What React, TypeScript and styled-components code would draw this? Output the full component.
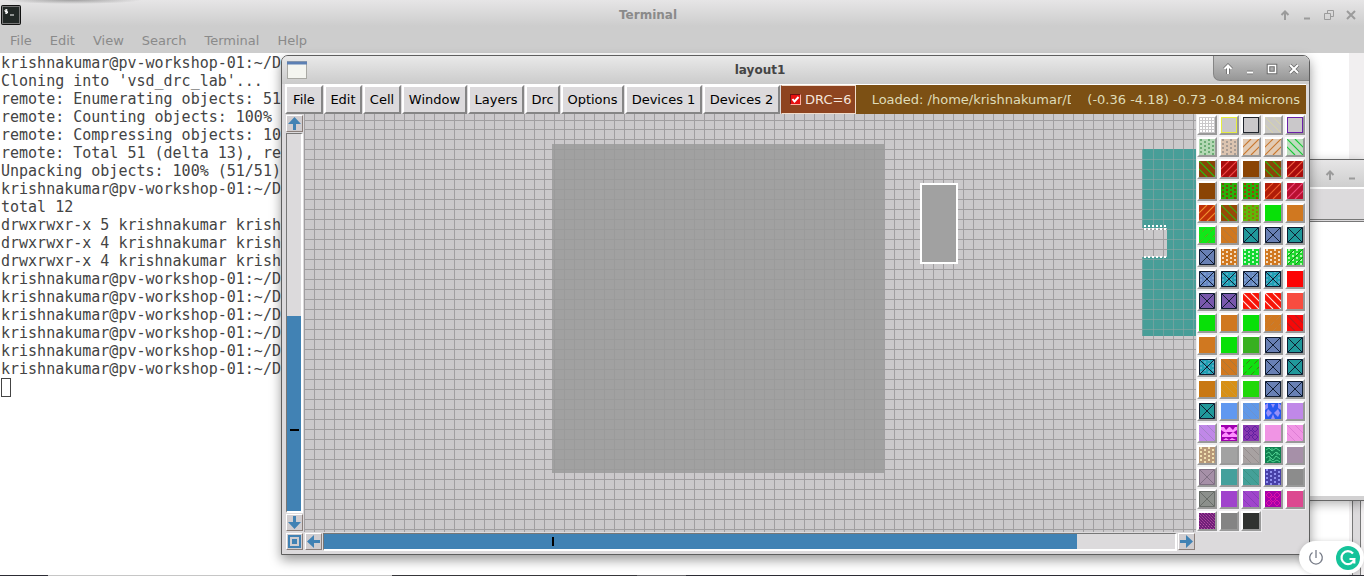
import React from 'react';
import styled, { createGlobalStyle, css } from 'styled-components';

const GlobalStyle = createGlobalStyle`
  * { box-sizing: border-box; }
  body { margin: 0; background: #fff; font-family: "DejaVu Sans", sans-serif; font-size: 13px; }
  button { font: inherit; color: inherit; border: 0; margin: 0; padding: 0; background: none; }
`;

const Desktop = styled.div`
  position: relative;
  display: flex;
  flex-direction: column;
  height: 100vh;
  min-height: 480px;
  margin-right: 2px;
  overflow: hidden;
`;

const Terminal = styled.section`
  flex: 1;
  min-height: 0;
  display: flex;
  flex-direction: column;
`;

const TerminalHead = styled.header`
  height: 53px;
  flex: none;
  color: #8a8a8a;
  background:
    radial-gradient(ellipse 70px 4px at 72px 0, rgba(90, 90, 90, 0.5), rgba(90, 90, 90, 0)),
    linear-gradient(#e6e5e6, #cdcdcd 26px);
`;

const TitleBar = styled.div<{ $height: number }>`
  display: flex;
  align-items: center;
  height: ${(p) => p.$height}px;
  font-size: 12px;
  font-weight: bold;
`;

const Title = styled.span`
  flex: 1;
  text-align: center;
`;

const TerminalTitle = styled(TitleBar)`
  padding: 1px 3px 0 1px;
`;

const Controls = styled.div<{ $active?: boolean }>`
  display: flex;
  gap: 2px;
  ${(p) =>
    p.$active &&
    css`
      align-self: start;
      height: 25px;
      padding: 3px 5px 0 4px;
      border: 1px solid #858585;
      border-width: 0 0 1px 1px;
      border-radius: 0 6px 0 7px;
      background: linear-gradient(#c4c4c4, #979797);
    `}
`;

const ControlButton = styled.button`
  display: grid;
  place-items: center;
  width: 20px;
  height: 20px;
`;

const TermMenu = styled.nav`
  display: flex;
  gap: 18px;
  padding: 5px 10px 0;
  line-height: 16px;
`;

const TermBody = styled.div`
  display: flex;
  flex: 1;
  min-height: 0;
  background: #fff;
`;

const Output = styled.pre`
  flex: 1;
  margin: 0;
  padding: 1px;
  font: 15px/18px "DejaVu Sans Mono", monospace;
  color: #444;
`;

const Caret = styled.span`
  display: block;
  width: 10px;
  height: 19px;
  border: 1px solid #444;
`;

const TermScroll = styled.div`
  width: 15px;
  background: #f1eff0;
`;

const Taskbar = styled.footer`
  display: flex;
  flex: none;
  height: 1px;
`;

const Task = styled.span<{ $grow: number; $color: string }>`
  flex: ${(p) => p.$grow} 0 0;
  background: ${(p) => p.$color};
`;

const SideWindow = styled.section`
  position: absolute;
  right: 0;
  top: 159px;
  bottom: 75px;
  width: 110px;
  display: flex;
  flex-direction: column;
  background: #fff;
  border-top: 1px solid #666;
  border-bottom: 1px solid #666;
  box-shadow: 0 3px 10px rgba(0, 0, 0, 0.3);
`;

const SideTitle = styled.div`
  display: flex;
  flex: none;
  justify-content: flex-end;
  align-items: center;
  gap: 2px;
  height: 29px;
  padding: 2px 2px 0;
  background: linear-gradient(#e6e5e6, #cfcfcf);
  border-bottom: 2px solid #fff;
`;

const SideMenu = styled.div`
  height: 33px;
  background: #dcdadc;
  border-bottom: 3px double #777;
`;

const SideFoot = styled.div`
  height: 4px;
  margin-top: auto;
  background: #d2d1d2;
`;

const LowerFrame = styled.div`
  position: absolute;
  right: 3px;
  bottom: 1px;
  width: 9px;
  height: 74px;
  background: #dcdadc;
  border: 1px solid #777;
  border-width: 0 1px;
`;

const LayoutWindow = styled.section`
  position: absolute;
  left: 281px;
  right: 54px;
  top: 55px;
  bottom: 21px;
  display: flex;
  flex-direction: column;
  border: 1px solid #5e5e5e;
  border-radius: 7px 7px 0 0;
  background: #dcdadc;
  box-shadow: 0 5px 12px rgba(0, 0, 0, 0.4);
`;

const LayoutTitle = styled(TitleBar)`
  flex: none;
  padding-left: 5px;
  color: #444;
  border-radius: 6px 6px 0 0;
  background: linear-gradient(#e9e9e9, #cbcbcb);
`;

const Frame = styled.div`
  flex: 1;
  min-height: 0;
  display: flex;
  flex-direction: column;
  margin: 0 3px 2px;
  border-top: 1px solid #fff;
`;

const Toolbar = styled.div`
  display: flex;
  flex: none;
  height: 29px;
  color: #000;
`;

const ToolButton = styled.button<{ $width: number }>`
  flex: none;
  width: ${(p) => p.$width}px;
  margin-right: 1px;
  border: 2px solid;
  border-color: #fff #858585 #858585 #fff;
  background: #dcdadc;
  line-height: 24px;
  text-align: center;
  white-space: nowrap;
`;

const DrcToggle = styled.label`
  display: flex;
  flex: none;
  align-items: center;
  gap: 4px;
  padding: 0 3px 0 8px;
  color: #f5e6dc;
  background: #8e4420;
  border: 1px solid #f0dccb;
  border-left-color: #8e4420;
`;

const DrcBox = styled.input`
  appearance: none;
  width: 11px;
  height: 11px;
  margin: 0;
  border: 1px solid;
  border-color: #701010 #ffb0a0 #ffb0a0 #701010;
  background: #e81010 url("data:image/svg+xml,%3Csvg xmlns='http://www.w3.org/2000/svg' viewBox='0 0 9 9'%3E%3Cpath d='M1.5 4l2 2.5 4-4.500' fill='none' stroke='white' stroke-width='2'/%3E%3C/svg%3E");
`;

const Status = styled.div`
  flex: 1;
  min-width: 0;
  display: flex;
  align-items: center;
  gap: 16px;
  padding: 0 6px 0 16px;
  white-space: nowrap;
  color: #dfdcb8;
  background: #7c5014;
`;

const Loaded = styled.span`
  flex: 1;
  min-width: 0;
  overflow: hidden;
`;

const Work = styled.div`
  flex: 1;
  min-height: 0;
  display: grid;
  grid-template-columns: 19px minmax(0, 1fr) auto;
  grid-template-rows: minmax(0, 1fr) 20px;
`;

const Scroll = styled.div<{ $vertical?: boolean }>`
  display: flex;
  flex-direction: ${(p) => (p.$vertical ? 'column' : 'row')};
  gap: 1px;
  padding: 1px;
`;

const ArrowButton = styled.button`
  display: grid;
  place-items: center;
  flex: none;
  width: 17px;
  height: 17px;
  border: 1px solid;
  border-color: #fff #8b7f7a #8b7f7a #fff;
  background: #d0cdd0;
`;

const Trough = styled.div<{ $vertical?: boolean }>`
  flex: 1;
  display: flex;
  flex-direction: ${(p) => (p.$vertical ? 'column' : 'row')};
  border: 1px solid;
  border-width: 1px 2px 2px 1px;
  border-color: #777 #fff #fff #777;
  background: #dcdadc;
`;

const Space = styled.div<{ $grow: number }>`
  flex: ${(p) => p.$grow} 0 0;
`;

const Thumb = styled.div<{ $grow: number; $vertical?: boolean }>`
  flex: ${(p) => p.$grow} 0 0;
  display: flex;
  flex-direction: ${(p) => (p.$vertical ? 'column' : 'row')};
  align-items: center;
  background: #4182b4;
`;

const Mark = styled.div<{ $vertical?: boolean }>`
  width: ${(p) => (p.$vertical ? 9 : 2)}px;
  height: ${(p) => (p.$vertical ? 2 : 9)}px;
  background: #000;
`;

const CanvasBox = styled.div`
  overflow: hidden;
  background: #cbc9cb;
`;

const Palette = styled.div`
  grid-row: span 2;
  display: grid;
  grid-template-columns: repeat(5, 20px);
  grid-auto-rows: 20px;
  gap: 2px;
  padding: 1px;
  align-content: start;
`;

const SwatchButton = styled.button`
  border: 2px solid;
  border-color: #fff #999 #999 #fff;
  outline: 1px solid #efeef0;
  background: #fff;
  line-height: 0;
`;

const Pill = styled.div`
  position: absolute;
  right: 0;
  bottom: 2px;
  display: flex;
  align-items: center;
  justify-content: space-between;
  width: 65px;
  height: 33px;
  padding: 0 4px 0 9px;
  border-radius: 17px;
  background: #fff;
  box-shadow: 0 0 5px rgba(0, 0, 0, 0.15);
`;

type Kind = 'pin' | 'min' | 'max' | 'restore' | 'close';
const shapes: Record<Kind, React.ReactNode> = {
  pin: <path d="M6 11V3M2.500 6L6 2.500 9.500 6" />,
  min: <path d="M3 9.500h6" />,
  max: <path d="M2.500 2.500h7v7h-7z" />,
  restore: <path d="M1.500 4.500h6v6h-6zM4.500 4V1.500h6v6H8" />,
  close: <path d="M2 2l8 8M10 2l-8 8" />,
};

const Control = ({ kind, active }: { kind: Kind; active?: boolean }) => (
  <ControlButton aria-label={kind}>
    <svg width="12" height="12" viewBox="0 0 12 12" fill="none" overflow="visible">
      {active && <g stroke="#6c6c6c" strokeWidth="3.6">{shapes[kind]}</g>}
      <g stroke={active ? '#fff' : '#9b9b9b'} strokeWidth={kind === 'restore' ? 1 : kind === 'max' ? 1.5 : 2}>{shapes[kind]}</g>
    </svg>
  </ControlButton>
);

const Arrow = ({ turn, name }: { turn: number; name: string }) => (
  <ArrowButton aria-label={name}>
    <svg width="15" height="15" viewBox="0 0 15 15">
      <path transform={`rotate(${turn} 7.5 7.5)`} d="M7.500 1L14 8H9v6H6V8H1z" fill="#4182b4" />
    </svg>
  </ArrowButton>
);

type Fill = 'solid' | 'box' | 'squares' | 'dots' | 'up' | 'down' | 'x' | 'xdots' | 'upFaint' | 'downFaint' | 'dotsUp' | 'tri' | 'blobs' | 'rings' | 'maze' | 'hatch';
type Sw = [string, Fill?, string?];

const N = '#101c30';
const G = '#08e008';
const O = '#d07820';
const T: Sw = ['#20989a', 'x', N];
const B: Sw = ['#6880b4', 'x', N];

const layers: Sw[] = [
  ['#cac8ca', 'squares', '#fff'], ['#cac8ca', 'box', '#e6ee40'], ['#cac8ca', 'box', '#20242c'], ['#cac8c4', 'downFaint', '#dcd8a0'], ['#cac8ca', 'box', '#6a20a8'],
  ['#b4d8b4', 'dots', '#6cac74'], ['#dcc4b0', 'dots', '#a89c94'], ['#e2cbb4', 'up', '#c87830'], ['#e2cbb4', 'up', '#c87830'], ['#c0dcc0', 'down', '#18c838'],
  ['#8a4408', 'down', '#28c010'], ['#a80c0c', 'up', '#f04848'], ['#8a4404'], ['#8a4408', 'down', '#28c010'], ['#a80c0c', 'up', '#f06040'],
  ['#8a4404'], ['#28b008', 'dots', '#784c08'], ['#28b008', 'dots', '#a03c08'], ['#b01c08', 'up', '#f06030'], ['#b81030', 'up', '#f04878'],
  ['#c03008', 'up', '#f09030'], ['#984808', 'down', '#38b010'], ['#60b808', 'dots', '#987010'], [G], [O],
  ['#10e818', 'upFaint', '#70a020'], [O, 'downFaint', '#a87848'], T, B, T,
  B, [O, 'dots', '#f4dcc0'], ['#10d830', 'dots', '#c8f8c8'], [O, 'dots', '#f4dcc0'], ['#20d830', 'dotsUp', '#b8f8b0'],
  ['#6888c4', 'xdots', N], ['#20a0b4', 'xdots', N], ['#6888c0', 'xdots', N], ['#20a0b4', 'xdots', N], ['#fc0404'],
  ['#7858ac', 'x', N], ['#7858ac', 'x', N], ['#f81408', 'down', '#ffe8e4'], ['#f81408', 'down', '#ffe8e4'], ['#f84c40'],
  [G], [O], [G], [O, 'upFaint', '#c08040'], ['#f80808', 'down', '#b02020'],
  [O], [G], ['#38b020'], B, T,
  ['#20a0b4', 'xdots', N], [O, 'downFaint', '#a07840'], ['#10e010', 'upFaint', '#408018'], B, T,
  ['#c87814'], ['#d89014', 'downFaint', '#c89840'], ['#20d808'], B, B,
  T, ['#6098f0'], ['#6098e8', 'downFaint', '#7090c8'], ['#2858f0', 'blobs', '#9890f8'], ['#c088e8'],
  ['#c088e8', 'downFaint', '#a080c0'], ['#a000b0', 'tri', '#ff90ff'], ['#8838b0', 'rings', '#6020a0'], ['#f094e4'], ['#f094e4', 'downFaint', '#d878d0'],
  ['#b89878', 'dots', '#f0e0b0'], ['#a2a2a2'], ['#a8a2a2', 'downFaint', '#908888'], ['#108050', 'maze', '#50d090'], ['#a690a8'],
  ['#a690a8', 'x', '#807084'], ['#44a09c'], ['#44a098', 'downFaint', '#389080'], ['#4840a8', 'dots', '#9090f0'], ['#8c8c8c'],
  ['#8c908c', 'x', '#686c68'], ['#a044cc'], ['#a044cc', 'downFaint', '#803cb0'], ['#a800a8', 'rings', '#e010a8'], ['#dc4890'],
  ['#702078', 'hatch', '#b850a8'], ['#848484'], ['#303230'],
];

const diag = (dir: 1 | -1, step: number) => {
  let d = '';
  for (let k = -16; k < 32; k += step) d += dir === 1 ? `M${k} 16L${k + 16} 0` : `M${k} 0L${k + 16} 16`;
  return d;
};

const dotPath = () => {
  let d = '';
  for (let x = 0; x < 4; x += 1)
    for (let y = 0; y < 4; y += 1) d += `M${x * 4 + 1} ${y * 4 + (x % 2 ? 2 : 0)}h2v2h-2z`;
  return d;
};

const squarePath = () => {
  let d = '';
  for (let x = 0; x < 5; x += 1) for (let y = 0; y < 5; y += 1) d += `M${x * 3 + 1} ${y * 3 + 1}h2v2h-2z`;
  return d;
};

const Pattern = ({ kind, ink }: { kind: Fill; ink: string }) => {
  switch (kind) {
    case 'box':
      return <rect x=".5" y=".5" width="15" height="15" fill="none" stroke={ink} strokeWidth="1" />;
    case 'squares':
      return <path d={squarePath()} fill={ink} />;
    case 'dots':
      return <path d={dotPath()} fill={ink} />;
    case 'dotsUp':
      return <><path d={dotPath()} fill={ink} /><path d={diag(1, 8)} stroke="#109018" /></>;
    case 'up':
      return <path d={diag(1, 8)} stroke={ink} strokeWidth="1.2" />;
    case 'down':
      return <path d={diag(-1, 8)} stroke={ink} strokeWidth="1.2" />;
    case 'upFaint':
      return <path d={diag(1, 8)} stroke={ink} strokeDasharray="5 3" />;
    case 'downFaint':
      return <path d={diag(-1, 8)} stroke={ink} strokeWidth=".8" />;
    case 'x':
    case 'xdots':
      return (
        <>
          {kind === 'xdots' && <path d={dotPath()} fill="#90b8d8" opacity=".5" />}
          <path d="M.5 .5h15v15H.5zM1 1l14 14M15 1L1 15" fill="none" stroke={ink} />
        </>
      );
    case 'tri':
      return <path d="M0 2h3l2 3 3-3h1l3 3 2-3h2v3l-3 2H3L0 5zM1 10l4-3 3 3 4-3 4 3v2H1zM2 15l3-2 3 2 3-2 4 2z" fill={ink} />;
    case 'blobs':
      return <path d="M0 2l3-2v5l-3 2zM6 1h4l-2 4zM13 0l3 2v5l-3-2zM3 6l4 4-4 4-2-4zM13 6l2 4-2 4-4-4zM8 11l2 5H6z" fill={ink} />;
    case 'rings':
      return <path d="M4 1l3 3-3 3-3-3zM12 1l3 3-3 3-3-3zM4 9l3 3-3 3-3-3zM12 9l3 3-3 3-3-3zM8 5l3 3-3 3-3-3z" fill="none" stroke={ink} strokeWidth="1" />;
    case 'maze':
      return <path d="M1 3l3-2 3 3 4-3 4 3M1 7l3-2 3 4 4-4 4 3M1 11l3-2 4 4 3-4 4 3M2 15l3-2 3 2 4-2 3 2M7 1v2M12 5v3M5 10v3" fill="none" stroke={ink} />;
    case 'hatch':
      return <path d={diag(-1, 3)} stroke={ink} strokeDasharray="2 1" />;
    default:
      return null;
  }
};

const gridX = [
  ...Array.from({ length: 60 }, (_, i) => i * 10),
  ...Array.from({ length: 23 }, (_, i) => 599 + i * 10),
  ...Array.from({ length: 60 }, (_, i) => 829 + i * 10),
];
const gridY = [6, ...Array.from({ length: 80 }, (_, i) => 15 + i * 10)];

const Grid = () => (
  <g fill="#858385" opacity=".6">
    {gridX.map((x) => <rect key={x} x={x} y="0" width="1" height="100%" />)}
    {gridY.map((y) => <rect key={y} x="0" y={y} width="100%" height="1" />)}
  </g>
);

const Drawing = () => (
  <svg width="100%" height="100%" shapeRendering="crispEdges">
    <Grid />
    <rect x="248" y="30" width="332" height="329" fill="#a1a1a1" />
    <path d="M838 35h300v187H838V143h25v-29h-25z" fill="#489e98" />
    <svg x="838" y="35" width="300" height="187">
      <path d="M0 0v79M0 108v79M11.500 0v79M11.500 108v79M21.500 0v79M21.500 108v79M31.500 0v187M41.500 0v187M51.500 0v187" stroke="#8aa5a4" opacity=".6" />
      <path d="M0 10.500h54M0 20.500h54M0 30.500h54M0 40.500h54M0 50.500h54M0 60.500h54M0 70.500h54M25 80.500h29M25 90.500h29M25 100.500h29M0 110.500h54M0 120.500h54M0 130.500h54M0 140.500h54M0 150.500h54M0 160.500h54M0 170.500h54M0 180.500h54" stroke="#8aa5a4" opacity=".6" />
      <path d="M2 77h23M2 80h23M2 108h23" stroke="#fff" strokeWidth="2" strokeDasharray="2 2" />
    </svg>
    <svg x="248" y="30" width="332" height="329">
      <path d={Array.from({ length: 34 }, (_, i) => `M${i * 10 + 2} 0v329M0 ${i * 10 + 5}h332`).join('')} stroke="#969696" opacity=".5" />
    </svg>
    <rect x="617" y="70" width="36" height="79" fill="#a1a1a1" stroke="#fff" strokeWidth="2" />
  </svg>
);

const output = [
  'krishnakumar@pv-workshop-01:~/D',
  "Cloning into 'vsd_drc_lab'...",
  'remote: Enumerating objects: 51',
  'remote: Counting objects: 100%',
  'remote: Compressing objects: 10',
  'remote: Total 51 (delta 13), re',
  'Unpacking objects: 100% (51/51)',
  'krishnakumar@pv-workshop-01:~/D',
  'total 12',
  'drwxrwxr-x 5 krishnakumar krish',
  'drwxrwxr-x 4 krishnakumar krish',
  'drwxrwxr-x 4 krishnakumar krish',
  ...Array(6).fill('krishnakumar@pv-workshop-01:~/D'),
];

const menus: [string, number][] = [
  ['File', 38], ['Edit', 38], ['Cell', 38], ['Window', 65], ['Layers', 56],
  ['Drc', 35], ['Options', 63], ['Devices 1', 77], ['Devices 2', 77],
];

export default function App() {
  return (
    <Desktop>
      <GlobalStyle />
      <Terminal>
        <TerminalHead>
          <TerminalTitle $height={28}>
            <svg width="20" height="20" viewBox="0 0 20 20">
              <rect x=".5" y=".5" width="19" height="19" rx="1" fill="#222826" stroke="#111" />
              <rect x="1.500" y="1.500" width="17" height="17" fill="none" stroke="#777" />
              <path d="M6.500 5H4v1.500h2.500V8H4M5.300 4v5M9 10h4" fill="none" stroke="#fff" />
            </svg>
            <Title>Terminal</Title>
            <Controls>
              <Control kind="pin" /><Control kind="min" /><Control kind="restore" /><Control kind="close" />
            </Controls>
          </TerminalTitle>
          <TermMenu>
            {['File', 'Edit', 'View', 'Search', 'Terminal', 'Help'].map((m) => <button key={m}>{m}</button>)}
          </TermMenu>
        </TerminalHead>
        <TermBody>
          <Output>
            {output.join('\n')}
            <Caret />
          </Output>
          <TermScroll />
        </TermBody>
      </Terminal>
      <Taskbar>
        <Task $grow={48} $color="#2c2c34" />
        <Task $grow={344} $color="#c6c6c6" />
        <Task $grow={245} $color="#36363a" />
        <Task $grow={49} $color="#66666a" />
        <Task $grow={678} $color="#2c2c34" />
      </Taskbar>

      <LowerFrame />
      <SideWindow>
        <SideTitle><Control kind="pin" /><Control kind="min" /></SideTitle>
        <SideMenu />
        <SideFoot />
      </SideWindow>

      <LayoutWindow>
        <LayoutTitle $height={28}>
          <svg width="20" height="18" viewBox="0 0 20 18">
            <rect x=".5" y=".5" width="19" height="17" fill="#f4f5f0" stroke="#a9a9a4" />
            <path d="M0 2h20" stroke="#5c80b4" strokeWidth="3" />
          </svg>
          <Title>layout1</Title>
          <Controls $active>
            <Control kind="pin" active /><Control kind="min" active /><Control kind="max" active /><Control kind="close" active />
          </Controls>
        </LayoutTitle>
        <Frame>
          <Toolbar>
            {menus.map(([label, width]) => <ToolButton key={label} $width={width}>{label}</ToolButton>)}
            <DrcToggle><DrcBox type="checkbox" defaultChecked />DRC=6</DrcToggle>
            <Status>
              <Loaded>Loaded: /home/krishnakumar/D</Loaded>
              <span>(-0.36 -4.18) -0.73 -0.84 microns</span>
            </Status>
          </Toolbar>
          <Work>
            <Scroll $vertical>
              <Arrow turn={0} name="Up" />
              <Trough $vertical>
                <Space $grow={182} />
                <Thumb $grow={195} $vertical>
                  <Space $grow={114} /><Mark $vertical /><Space $grow={80} />
                </Thumb>
              </Trough>
              <Arrow turn={180} name="Down" />
            </Scroll>
            <CanvasBox><Drawing /></CanvasBox>
            <Palette>
              {layers.map(([color, kind = 'solid', ink = '#000'], i) => (
                <SwatchButton key={i} aria-label={`Layer ${i + 1}`}>
                  <svg width="16" height="16" viewBox="0 0 16 16">
                    <rect width="16" height="16" fill={color} />
                    <Pattern kind={kind} ink={ink} />
                  </svg>
                </SwatchButton>
              ))}
            </Palette>
            <Scroll>
              <ArrowButton aria-label="Zoom">
                <svg width="15" height="15" viewBox="0 0 15 15">
                  <path d="M2 2h11v11H2z" fill="none" stroke="#4182b4" strokeWidth="2" />
                  <path d="M5 5h5v5H5z" fill="#4182b4" />
                </svg>
              </ArrowButton>
            </Scroll>
            <Scroll>
              <Arrow turn={270} name="Left" />
              <Trough>
                <Thumb $grow={754}>
                  <Space $grow={229} /><Mark /><Space $grow={524} />
                </Thumb>
                <Space $grow={98} />
              </Trough>
              <Arrow turn={90} name="Right" />
            </Scroll>
          </Work>
        </Frame>
      </LayoutWindow>

      <Pill>
        <svg width="16" height="16" viewBox="0 0 16 16" fill="none" stroke="#777c88" strokeWidth="1.300">
          <path d="M4.500 2.500a6.300 6.300 0 1 0 7 0M8 0v8" />
        </svg>
        <svg width="24" height="24" viewBox="0 0 24 24" fill="none">
          <circle cx="12" cy="12" r="12" fill="#15c39a" />
          <path d="M17 7.500A6.500 6.500 0 1 0 18.300 13H13.500M18.300 12.500v5" stroke="#fff" strokeWidth="2.200" />
        </svg>
      </Pill>
    </Desktop>
  );
}
